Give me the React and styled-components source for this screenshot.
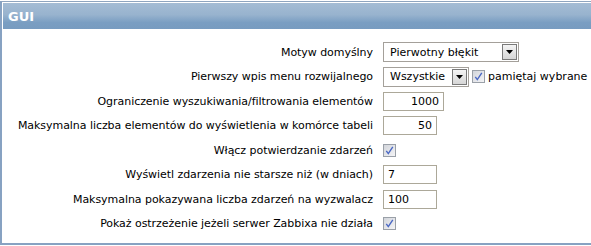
import React from 'react';
import styled, { createGlobalStyle } from 'styled-components';

// ==============================================

const GlobalStyle = createGlobalStyle`
  html, body { margin: 0; padding: 0; background: #ffffff; }
  body { font-family: "DejaVu Sans", Verdana, sans-serif; font-size: 11px; color: #000; }
`;

const Frame = styled.div`
  margin-top: 1px;
  height: 244px;
  box-sizing: border-box;
  border-top: 1px solid #8fa5bf;
  border-left: 2px solid #87a2c2;
  border-bottom: 2px solid #87a2c2;
  padding: 1px 0 0 1px;
`;

const Header = styled.div`
  height: 26px;
  display: flex;
  align-items: center;
  padding-left: 5px;
  background: linear-gradient(#a4bcd4 0%, #98b3ce 45%, #7a9ec2 75%, #779bc0 100%);
  color: #ffffff;
  font-weight: bold;
  font-size: 13px;
`;

const Form = styled.div`
  display: grid;
  grid-template-columns: 370px 1fr;
  column-gap: 10px;
  padding-top: 11px;
`;

const Label = styled.div`
  height: 24.5px;
  display: flex;
  align-items: center;
  justify-content: flex-end;
  white-space: nowrap;
  letter-spacing: -0.05px;
`;

const Cell = styled.div`
  height: 24.5px;
  display: flex;
  align-items: center;
  gap: 3px;
`;

const SelectBox = styled.div`
  width: ${({ w }) => w}px;
  height: 20px;
  box-sizing: border-box;
  border: 1px solid #a4a09a;
  display: flex;
  align-items: center;
  justify-content: space-between;
  padding: 0 1px 0 6px;
  background: #fff;
`;

const SelectButton = styled.div`
  width: 15px;
  height: 16px;
  box-sizing: border-box;
  border: 1px solid #7a7a7a;
  background: linear-gradient(#f4f4f4, #d6d6d6);
  display: flex;
  align-items: center;
  justify-content: center;
`;

const Input = styled.div`
  width: ${({ w }) => w}px;
  height: 19px;
  box-sizing: border-box;
  border: 1px solid #aca899;
  display: flex;
  align-items: center;
  justify-content: ${({ right }) => (right ? 'flex-end' : 'flex-start')};
  padding: 0 4px;
  background: #fff;
`;

const Box = styled.div`
  width: 13px;
  height: 13px;
  box-sizing: border-box;
  border: 1px solid #9aa0a8;
  background: linear-gradient(135deg, #d2d5db, #f4f4f6);
  display: flex;
  align-items: center;
  justify-content: center;
`;

// ==============================================

const Select = ({ w, value }) => (
  <SelectBox w={w}>
    <span>{value}</span>
    <SelectButton>
      <svg width="7" height="4" viewBox="0 0 7 4">
        <path d="M0 0h7L3.5 4z" fill="#000" />
      </svg>
    </SelectButton>
  </SelectBox>
);

const Check = () => (
  <Box>
    <svg width="9" height="9" viewBox="0 0 9 9">
      <path d="M1.3 4.8l2 2.8L7.8 0.8" fill="none" stroke="#4a68c4" strokeWidth="1.4" />
    </svg>
  </Box>
);

const rows = [
  ['Motyw domyślny', <Select w={136} value="Pierwotny błękit" />],
  ['Pierwszy wpis menu rozwijalnego', <><Select w={86} value="Wszystkie" /><Check /><span>pamiętaj wybrane</span></>],
  ['Ograniczenie wyszukiwania/filtrowania elementów', <Input w={61} right>1000</Input>],
  ['Maksymalna liczba elementów do wyświetlenia w komórce tabeli', <Input w={54} right>50</Input>],
  ['Włącz potwierdzanie zdarzeń', <Check />],
  ['Wyświetl zdarzenia nie starsze niż (w dniach)', <Input w={54}>7</Input>],
  ['Maksymalna pokazywana liczba zdarzeń na wyzwalacz', <Input w={54}>100</Input>],
  ['Pokaż ostrzeżenie jeżeli serwer Zabbixa nie działa', <Check />],
];

const App = () => (
  <>
    <GlobalStyle />
    <Frame>
      <Header>GUI</Header>
      <Form>
        {rows.map(([label, control]) => (
          <React.Fragment key={label}>
            <Label>{label}</Label>
            <Cell>{control}</Cell>
          </React.Fragment>
        ))}
      </Form>
    </Frame>
  </>
);

export default App;
